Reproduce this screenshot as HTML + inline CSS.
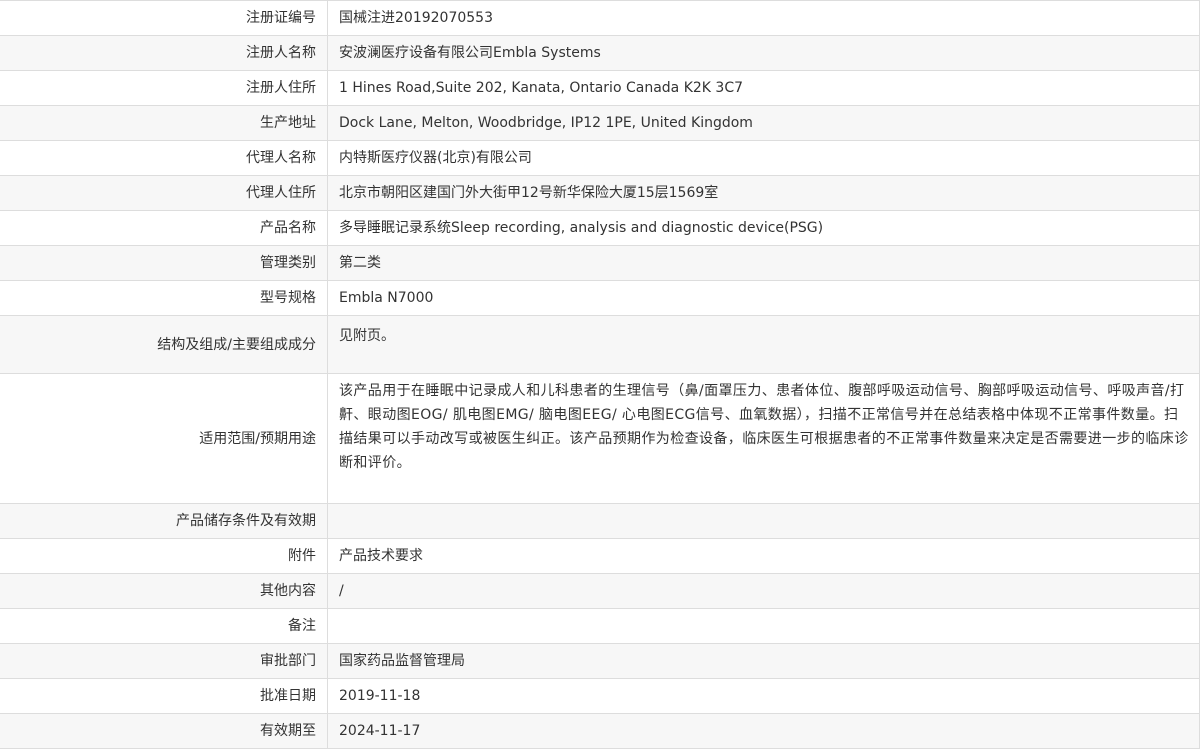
<!DOCTYPE html>
<html><head><meta charset="utf-8"><style>
html,body{margin:0;padding:0;background:#fff;}
table{border-collapse:collapse;width:1201px;margin-left:-1px;font-family:"DejaVu Sans","Noto Sans CJK SC",sans-serif;font-size:14px;color:#333;}
td{border:1px solid #ddd;height:34px;padding:0;box-sizing:border-box;line-height:24px;}
td.l{width:328px;text-align:right;padding-right:11px;vertical-align:middle;}
td.v{padding-left:11px;vertical-align:middle;}
tr:nth-child(even){background:#f7f7f7;}
td.t{vertical-align:top;padding-top:8px;}
.w{letter-spacing:0.4px;white-space:nowrap;overflow:hidden;}
</style></head><body>
<table>
<tr style="height:35px"><td class="l">注册证编号</td><td class="v">国械注进20192070553</td></tr>
<tr style="height:35px"><td class="l">注册人名称</td><td class="v">安波澜医疗设备有限公司Embla Systems</td></tr>
<tr style="height:35px"><td class="l">注册人住所</td><td class="v">1 Hines Road,Suite 202, Kanata, Ontario Canada K2K 3C7</td></tr>
<tr style="height:35px"><td class="l">生产地址</td><td class="v">Dock Lane, Melton, Woodbridge, IP12 1PE, United Kingdom</td></tr>
<tr style="height:35px"><td class="l">代理人名称</td><td class="v">内特斯医疗仪器(北京)有限公司</td></tr>
<tr style="height:35px"><td class="l">代理人住所</td><td class="v">北京市朝阳区建国门外大街甲12号新华保险大厦15层1569室</td></tr>
<tr style="height:35px"><td class="l">产品名称</td><td class="v">多导睡眠记录系统Sleep recording, analysis and diagnostic device(PSG)</td></tr>
<tr style="height:35px"><td class="l">管理类别</td><td class="v">第二类</td></tr>
<tr style="height:35px"><td class="l">型号规格</td><td class="v">Embla N7000</td></tr>
<tr style="height:58px"><td class="l">结构及组成/主要组成成分</td><td class="v t">见附页。</td></tr>
<tr style="height:130px"><td class="l">适用范围/预期用途</td><td class="v t w" style="padding-top:5px;padding-right:0">该产品用于在睡眠中记录成人和儿科患者的生理信号（鼻/面罩压力、患者体位、腹部呼吸运动信号、胸部呼吸运动信号、呼吸声音/打<br>鼾、眼动图EOG/ 肌电图EMG/ 脑电图EEG/ 心电图ECG信号、血氧数据），扫描不正常信号并在总结表格中体现不正常事件数量。扫<br>描结果可以手动改写或被医生纠正。该产品预期作为检查设备，临床医生可根据患者的不正常事件数量来决定是否需要进一步的临床诊<br>断和评价。</td></tr>
<tr style="height:35px"><td class="l">产品储存条件及有效期</td><td class="v"></td></tr>
<tr style="height:35px"><td class="l">附件</td><td class="v">产品技术要求</td></tr>
<tr style="height:35px"><td class="l">其他内容</td><td class="v">/</td></tr>
<tr style="height:35px"><td class="l">备注</td><td class="v"></td></tr>
<tr style="height:35px"><td class="l">审批部门</td><td class="v">国家药品监督管理局</td></tr>
<tr style="height:35px"><td class="l">批准日期</td><td class="v">2019-11-18</td></tr>
<tr style="height:35px"><td class="l">有效期至</td><td class="v">2024-11-17</td></tr>
</table>
</body></html>
